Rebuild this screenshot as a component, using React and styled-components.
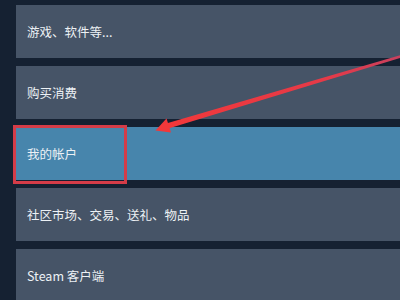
import React from "react";
import styled, { createGlobalStyle } from "styled-components";

const GlobalStyle = createGlobalStyle`
  html, body {
    margin: 0;
    padding: 0;
    background: #152132;
    overflow: hidden;
  }
`;

const items = [
  "游戏、软件等...",
  "购买消费",
  "我的帐户",
  "社区市场、交易、送礼、物品",
  "Steam 客户端",
];

export default () => {
  return (
    <Page>
      <GlobalStyle />
      <List>
        {items.map((label, i) => (
          <Row key={label} $active={i === 2}>
            {label}
            {i === 2 && <Highlight />}
          </Row>
        ))}
      </List>
      <Arrow width="400" height="300" viewBox="0 0 400 300">
        <defs>
          <linearGradient id="shaft" x1="160" y1="128" x2="400" y2="56" gradientUnits="userSpaceOnUse">
            <stop offset="0" stopColor="#f2383a" />
            <stop offset="0.7" stopColor="#e53a48" />
            <stop offset="1" stopColor="#c8405e" />
          </linearGradient>
        </defs>
        <polygon
          points="168.4,128.6 166.2,123.4 401.7,54.8 402.3,57.2"
          fill="url(#shaft)"
        />
        <polygon points="155.5,130.5 171,132.5 166.5,118.5" fill="#f2383a" />
      </Arrow>
    </Page>
  );
};

const Page = styled.div`
  position: relative;
  width: 400px;
  height: 300px;
  overflow: hidden;
  background: #152132;
  font-family: "Noto Sans CJK SC", "Noto Sans", sans-serif;
`;

const List = styled.div`
  display: flex;
  flex-direction: column;
  gap: 8px;
  padding: 5px 0 0 16px;
`;

const Row = styled.div`
  position: relative;
  flex: none;
  height: 53px;
  display: flex;
  align-items: center;
  padding-left: 11px;
  background: ${(p) => (p.$active ? "#4785ac" : "#465467")};
  color: #edf1f5;
  font-size: 12.5px;
`;

const Highlight = styled.div`
  position: absolute;
  left: -3px;
  top: -2px;
  width: 114px;
  height: 59px;
  box-sizing: border-box;
  border: 3px solid #d43c48;
`;

const Arrow = styled.svg`
  position: absolute;
  left: 0;
  top: 0;
  pointer-events: none;
`;
